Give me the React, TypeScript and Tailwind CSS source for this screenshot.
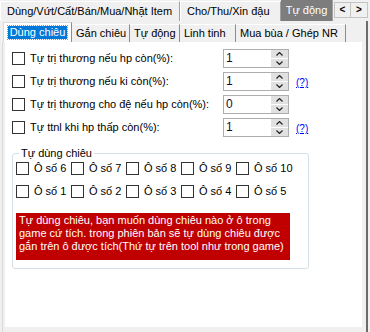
import React from "react";

const Check = () => (
  <span className="inline-block w-[13px] h-[13px] shrink-0 border border-[#333333] bg-white" />
);

const Spinner = ({ value }: { value: string }) => (
  <div className="flex w-[66px] h-[19px] border border-[#adadad] bg-white">
    <div className="flex-1 pl-[2px] text-[12px] leading-[17px] text-[#1a0a2e]">{value}</div>
    <div className="flex flex-col w-[17px] gap-[1px] bg-white">
      <div className="flex-1 flex items-center justify-center bg-[#e1e1e1]">
        <svg width="7" height="4" viewBox="0 0 7 4">
          <path d="M0.5 3.5 L3.5 0.5 L6.5 3.5" fill="none" stroke="#222" strokeWidth="1.2" />
        </svg>
      </div>
      <div className="flex-1 flex items-center justify-center bg-[#e1e1e1]">
        <svg width="7" height="4" viewBox="0 0 7 4">
          <path d="M0.5 0.5 L3.5 3.5 L6.5 0.5" fill="none" stroke="#222" strokeWidth="1.2" />
        </svg>
      </div>
    </div>
  </div>
);

const Help = () => (
  <span className="text-[10px] leading-[12px] text-[#0000ff] underline">(?)</span>
);

const settings = [
  { label: "Tự trị thương nếu hp còn(%):", value: "1", help: false },
  { label: "Tự trị thương nếu ki còn(%):", value: "1", help: true },
  { label: "Tự trị thương cho đệ nếu hp còn(%):", value: "0", help: false },
  { label: "Tự ttnl khi hp thấp còn(%):", value: "1", help: true },
];

const topTabs = [
  { name: "Dùng/Vứt/Cất/Bán/Mua/Nhặt Item", w: "w-[180px]" },
  { name: "Cho/Thu/Xin đậu", w: "w-[101px]" },
];

const subTabs = [
  { name: "Gắn chiêu", w: "w-[58px]" },
  { name: "Tự động", w: "w-[50px]" },
  { name: "Linh tinh", w: "w-[56px]" },
  { name: "Mua bùa / Ghép NR", w: "w-[110px]" },
];

const slotsTop = ["Ô số 6", "Ô số 7", "Ô số 8", "Ô số 9", "Ô số 10"];
const slotsBottom = ["Ô số 1", "Ô số 2", "Ô số 3", "Ô số 4", "Ô số 5"];

const SlotRow = ({ items }: { items: string[] }) => (
  <div className="flex h-[17px]">
    {items.map(s => (
      <div key={s} className="flex items-center gap-[5px] w-[55px] shrink-0 whitespace-nowrap">
        <Check />
        <span>{s}</span>
      </div>
    ))}
  </div>
);

export default function App() {
  return (
    <div className="w-[370px] h-[332px] bg-[#f0f0f0] overflow-hidden text-[11px] text-black font-['Liberation_Sans',Arial,sans-serif]">
      {/* top tab row */}
      <div className="flex h-[21px] items-start">
        {topTabs.map(t => (
          <div
            key={t.name}
            className={`${t.w} shrink-0 h-[20px] mt-[1px] flex items-center pl-[6px] border-l border-t border-white border-r border-r-[#a0a0a0] bg-[#f0f0f0] leading-none whitespace-nowrap`}
          >
            {t.name}
          </div>
        ))}
        <div className="w-[52px] shrink-0 h-[21px] flex items-center justify-center bg-[#7d7d7d] text-white border-r border-[#a0a0a0] leading-none whitespace-nowrap">
          Tự động
        </div>
        <div className="flex shrink-0 ml-[1px] mt-[2px]">
          <div className="w-[17px] h-[16px] flex items-center justify-center border border-[#c4c4c4] bg-[#f0f0f0] text-[10px] font-bold leading-none">
            &lt;
          </div>
          <div className="w-[17px] h-[16px] flex items-center justify-center border border-l-0 border-[#c4c4c4] bg-[#f0f0f0] text-[10px] font-bold leading-none">
            &gt;
          </div>
        </div>
      </div>

      {/* body */}
      <div className="flex h-[311px]">
        <div className="w-[366px] flex flex-col">
          {/* second tab row */}
          <div className="flex h-[21px] pl-[3px] items-end">
            <div className="w-[69px] h-[20px] flex items-center justify-center bg-white border border-b-0 border-[#d9d9d9] border-r-[#8c8c8c]">
              <span className="px-[2px] h-[13px] leading-[13px] bg-[#0078d7] text-white outline-1 outline-dotted outline-[#e08a1e]">
                Dùng chiêu
              </span>
            </div>
            {subTabs.map(t => (
              <div
                key={t.name}
                className={`${t.w} h-[18px] flex items-center pl-[4px] border-t border-white border-r border-r-[#8c8c8c] whitespace-nowrap`}
              >
                {t.name}
              </div>
            ))}
          </div>

          {/* page */}
          <div className="flex flex-1 border-l border-[#dadada] ml-[2px] pb-[5px]">
            <div className="ml-[2px] w-[357px] bg-white pt-[7px] pl-[7px]">
              <div className="flex flex-col gap-[4px]">
                {settings.map(s => (
                  <div key={s.label} className="flex items-center h-[19px]">
                    <Check />
                    <span className="ml-[5px] w-[193px] whitespace-nowrap">{s.label}</span>
                    <Spinner value={s.value} />
                    {s.help && (
                      <span className="ml-[7px] mt-[2px]">
                        <Help />
                      </span>
                    )}
                  </div>
                ))}
              </div>

              {/* group box */}
              <div className="relative mt-[16px] w-[297px] h-[116px] border border-[#d5dfe5] rounded-[3px] pt-[6px] pl-[3px]">
                <span className="absolute -top-[8px] left-[6px] bg-white px-[2px] leading-[14px] text-[11px]">
                  Tự dùng chiêu
                </span>
                <div className="flex flex-col gap-[6px]">
                  <SlotRow items={slotsTop} />
                  <SlotRow items={slotsBottom} />
                </div>
                <div className="mt-[13px] w-[274px] h-[47px] bg-[#c00000] text-white pl-[3px] pt-[1px] leading-[13px] whitespace-nowrap">
                  Tự dùng chiêu, bạn muốn dùng chiêu nào ở ô trong
                  <br />
                  game cứ tích. trong phiên bản sẽ tự dùng chiêu được
                  <br />
                  gắn trên ô được tích(Thứ tự trên tool như trong game)
                </div>
              </div>
            </div>
          </div>
        </div>
        <div className="w-[2px] bg-[#6b6b6b]" />
      </div>
    </div>
  );
}
